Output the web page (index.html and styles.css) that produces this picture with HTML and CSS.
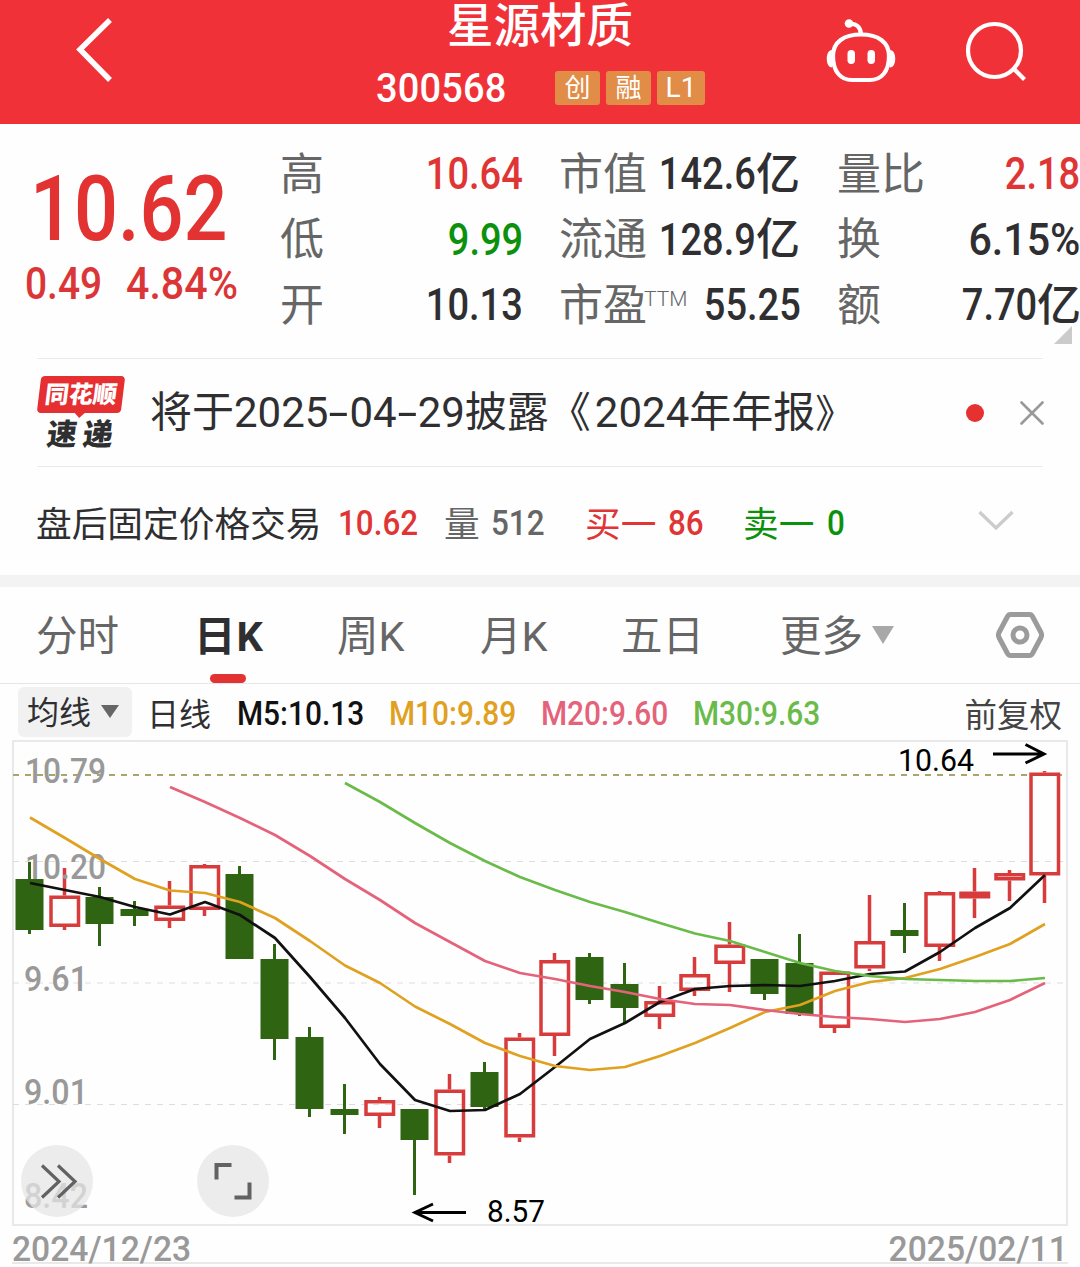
FILE: index.html
```html
<!DOCTYPE html>
<html lang="zh-CN">
<head>
  <meta charset="UTF-8" />
  <meta name="viewport" content="width=device-width, initial-scale=1.0" />
  <title>星源材质 300568</title>
  <link rel="stylesheet" href="styles.css">
</head>
<body>
  <!-- Header -->
  <header class="header">
    <svg class="back-icon" width="44" height="70" viewBox="0 0 44 70">
      <path d="M38 6 L8 35.500 L38 66" />
    </svg>
    <div class="stock">
      <h1 class="stock-name">星源材质</h1>
      <div class="stock-meta">
        <span class="stock-code">300568</span>
        <span class="tag">创</span>
        <span class="tag">融</span>
        <span class="tag tag-level">L1</span>
      </div>
    </div>
    <div class="header-actions">
      <svg width="72" height="66" viewBox="0 0 72 66">
        <path class="line" d="M37 16.500 C54 16.500 65 24 65 38 C65 54 57 62 46 62 H28 C17 62 9 54 9 38 C9 24 20 16.500 37 16.500 Z" />
        <path class="line" d="M26 6 C32 5 36.500 9 37 16" />
        <circle class="solid" cx="25" cy="5.500" r="4.300" />
        <path class="solid" d="M8 32 C1 32 1 49.500 8 49.500 Z M66 32 C73 32 73 49.500 66 49.500 Z" />
        <rect class="solid" x="23.500" y="32" width="7.500" height="14" rx="3.700" />
        <rect class="solid" x="43.500" y="32" width="7.500" height="14" rx="3.700" />
      </svg>
      <svg width="64" height="64" viewBox="0 0 64 64">
        <circle class="line" cx="30.500" cy="32.500" r="26.500" />
        <path class="line" d="M49 50 L60.500 61.500" />
      </svg>
    </div>
  </header>

  <!-- Quote -->
  <section class="quote">
    <div class="quote-main">
      <div class="price"><span class="num">10.62</span></div>
      <div class="change"><span class="num">0.49</span><span class="num percent">4.84%</span></div>
    </div>
    <div class="stats">
      <div class="stat"><span class="label">高</span><span class="num up">10.64</span></div>
      <div class="stat"><span class="label">市值</span><span class="num">142.6</span><span class="unit">亿</span></div>
      <div class="stat"><span class="label">量比</span><span class="num up">2.18</span></div>
      <div class="stat"><span class="label">低</span><span class="num down">9.99</span></div>
      <div class="stat"><span class="label">流通</span><span class="num">128.9</span><span class="unit">亿</span></div>
      <div class="stat"><span class="label">换</span><span class="num percent">6.15%</span></div>
      <div class="stat"><span class="label">开</span><span class="num">10.13</span></div>
      <div class="stat"><span class="label">市盈<sup>TTM</sup></span><span class="num">55.25</span></div>
      <div class="stat"><span class="label">额</span><span class="num">7.70</span><span class="unit">亿</span></div>
    </div>
    <div class="corner"></div>
  </section>

  <!-- News -->
  <section class="news">
    <div class="news-logo">
      <div class="logo-top">同花顺</div>
      <div class="logo-bottom">速递</div>
    </div>
    <p class="news-text">将于2025<i>-</i>04<i>-</i>29披露《<span class="year">2024</span>年年报<span class="close-mark">》</span></p>
    <span class="dot"></span>
    <svg class="close" width="24" height="24" viewBox="0 0 24 24"><path d="M1.500 1.500 L22.500 22.500 M22.500 1.500 L1.500 22.500" /></svg>
  </section>

  <!-- After-hours trading -->
  <section class="after">
    <span>盘后固定价格交易</span>
    <span class="num up">10.62</span>
    <span class="grey">量</span>
    <span class="num grey">512</span>
    <span class="up">买一</span>
    <span class="num up">86</span>
    <span class="down">卖一</span>
    <span class="num down">0</span>
    <svg width="36" height="22" viewBox="0 0 36 22"><path d="M1.500 2 L18 18 L34.500 2" /></svg>
  </section>

  <!-- Period tabs -->
  <nav class="tabs">
    <span class="tab">分时</span>
    <span class="tab active">日K</span>
    <span class="tab">周K</span>
    <span class="tab">月K</span>
    <span class="tab">五日</span>
    <span class="tab">更多<i class="caret"></i></span>
    <svg width="50" height="48" viewBox="0 0 50 48">
      <path d="M15.500 3.500 H34.500 Q36.500 3.500 37.500 5.500 L46 21.500 Q47.200 24 46 26.500 L37.500 42.500 Q36.500 44.500 34.500 44.500 H15.500 Q13.500 44.500 12.500 42.500 L4 26.500 Q2.800 24 4 21.500 L12.500 5.500 Q13.500 3.500 15.500 3.500 Z" />
      <circle cx="25" cy="24" r="7" />
    </svg>
  </nav>

  <!-- Moving averages -->
  <div class="averages">
    <span class="picker">均线<i class="caret"></i></span>
    <span class="cycle">日线</span>
    <span class="ma ma5">M5:10.13</span>
    <span class="ma ma10">M10:9.89</span>
    <span class="ma ma20">M20:9.60</span>
    <span class="ma ma30">M30:9.63</span>
    <span class="adjust">前复权</span>
  </div>

  <!-- Candle chart -->
  <svg class="chart" width="1080" height="487" viewBox="0 740 1080 487">
    <rect class="frame" x="13" y="741" width="1054" height="484" />
    <path class="grid" d="M13 861.500 H1067 M13 983 H1067 M13 1104.500 H1067" />
    <path class="last" d="M13 775 H1062" />
    <g id="candles"></g>
    <g class="axis">
      <text x="25" y="783" textLength="81" lengthAdjust="spacingAndGlyphs">10.79</text>
      <text x="25" y="879" textLength="81" lengthAdjust="spacingAndGlyphs">10.20</text>
      <text x="24" y="991" textLength="64" lengthAdjust="spacingAndGlyphs">9.61</text>
      <text x="24" y="1104" textLength="64" lengthAdjust="spacingAndGlyphs">9.01</text>
      <text x="24" y="1208" textLength="64" lengthAdjust="spacingAndGlyphs">8.42</text>
    </g>
    <g id="lines"></g>
    <g class="marks">
      <text x="898" y="771" textLength="76" lengthAdjust="spacingAndGlyphs">10.64</text>
      <path d="M993 754 H1044 M1025.500 744.500 L1044 754 L1025.500 763" />
      <text x="487" y="1222" textLength="58" lengthAdjust="spacingAndGlyphs">8.57</text>
      <path d="M466 1212.500 H415 M433 1204 L415 1212.500 L433 1221" />
    </g>
    <g class="tools">
      <circle cx="57" cy="1181" r="36" />
      <path class="thin" d="M42 1165.500 L59 1181.500 L42 1197.500 M58 1165.500 L75 1181.500 L58 1197.500" />
      <circle cx="233" cy="1181" r="36" />
      <path d="M216.500 1179.500 V1165 H231.500 M234.500 1197.500 H249.500 V1182.500" />
    </g>
  </svg>
  <footer class="dates"><span>2024/12/23</span><span>2025/02/11</span></footer>

  <script>
    // [rising, high, body top, body bottom, low] in chart units
    const candles = [
      [0, 862, 879, 930, 934], [1, 868, 895.5, 927, 930], [0, 887, 897, 924, 946],
      [0, 901, 909, 916, 926], [1, 881, 905.5, 921, 928], [1, 864, 865, 910, 916],
      [0, 866, 874, 959, 959], [0, 944, 959, 1039, 1060], [0, 1027, 1037, 1109, 1117],
      [0, 1084, 1109, 1115, 1134], [1, 1097, 1100, 1116, 1128], [0, 1109, 1109, 1140, 1195],
      [1, 1074, 1089.5, 1155.5, 1163], [0, 1062, 1072, 1107, 1109], [1, 1033, 1037.5, 1137.5, 1142],
      [1, 953, 960, 1036, 1056], [0, 953, 957, 1000, 1004], [0, 963, 984, 1008, 1024],
      [1, 986, 1001, 1017, 1029], [1, 957, 974, 991, 996], [1, 922, 944.5, 964, 992],
      [0, 959, 959, 994, 1000], [0, 934, 963, 1014, 1016], [1, 970, 971.5, 1028, 1033],
      [1, 895, 941, 968.5, 971], [0, 903, 930, 936, 953], [1, 891, 892, 947, 961],
      [1, 868, 891.5, 898.5, 918], [1, 870, 873, 880.5, 901], [1, 771, 772.5, 875.5, 903]
    ];
    // first candle index, then one y value per candle
    const averages = {
      ma5: [0, 883, 890, 897, 907, 914.5, 902, 915, 938, 977, 1018, 1064, 1100, 1111, 1110, 1094, 1067, 1039, 1023, 1002, 989, 986, 985, 986, 981, 974, 971.5, 952, 928, 908, 875],
      ma10: [0, 817.5, 838, 859, 879, 890.5, 893, 902, 918, 941, 965.5, 983, 1006.5, 1024, 1043, 1056, 1066, 1070, 1067, 1056, 1043, 1028, 1012, 1005, 991, 982, 978, 969, 957, 944, 924],
      ma20: [4, 787, 802, 818, 835, 856, 879, 900, 923, 942, 961, 973, 979, 986, 992, 999, 1004, 1005, 1010, 1014, 1017, 1019, 1022, 1019, 1012, 1000, 983],
      ma30: [9, 783, 802, 823, 843, 861, 877, 890, 902, 912, 923, 933.5, 941, 952, 963, 971, 976, 979, 980, 981, 981, 978]
    };
    const step = 35;

    document.getElementById('candles').innerHTML = candles.map(([up, high, top, bottom, low], i) => {
      const x = 29.5 + i * step;
      const wick = `<path d="M${x} ${high} V${top} M${x} ${bottom} V${low}" />`;
      const body = up
        ? `<rect x="${x - 13.5}" y="${top + 1.75}" width="27.500" height="${bottom - top - 3.5}" />`
        : `<rect x="${x - 14}" y="${top}" width="28" height="${bottom - top}" />`;
      return `<g class="${up ? 'rise' : 'fall'}">${wick}${body}</g>`;
    }).join('');

    document.getElementById('lines').innerHTML = ['ma5', 'ma10', 'ma20', 'ma30'].map(name => {
      const [start, ...ys] = averages[name];
      const points = ys.map((y, i) => `${30 + (start + i) * step},${y}`).join(' ');
      return `<polyline class="${name}" points="${points}" />`;
    }).join('');
  </script>
</body>
</html>
```

FILE: styles.css
```css
* { box-sizing: border-box; margin: 0; padding: 0; }
body {
  width: 1080px; height: 1267px;
  overflow: hidden;
  background: #fefefe;
  color: #2f2f31;
  font-family: Roboto, "Noto Sans CJK SC", sans-serif;
}
svg { display: block; flex: none; }
i { font-style: normal; }
.num {
  display: inline-block;
  font-weight: 500;
  transform: scaleX(.88);
  transform-origin: left;
}
.up { color: #df3535; }
.down { color: #0c910c; }
.grey { color: #666; }

/* Header */
.header {
  height: 124px;
  display: flex;
  padding: 0 52px 0 72px;
  background: #f03138;
  color: #fff;
}
.header svg { fill: none; stroke: #fff; stroke-width: 4.2; }
.back-icon { margin-top: 14px; }
.header .back-icon { stroke-width: 5.5; }
.header .solid { fill: #fff; stroke: none; }
.stock { width: 330px; margin-left: 260px; }
.stock-name {
  height: 52px; line-height: 52px;
  padding-left: 71px;
  font-size: 46.5px; font-weight: 500;
}
.stock-meta { display: flex; align-items: center; gap: 6px; margin-top: 18px; }
.stock-code {
  width: 173px; line-height: 36px;
  font-size: 41.5px; font-weight: 500;
  transform: scaleX(.915); transform-origin: left;
  letter-spacing: .2px;
}
.tag {
  width: 45px; height: 34px;
  flex: none;
  border-radius: 3px;
  background: #e18d47;
  font-size: 26px; line-height: 34px; text-align: center;
}
.tag-level { width: 48px; font-size: 28px; }
.header-actions { display: flex; gap: 68px; padding-top: 18px; margin-left: auto; }

/* Quote */
.quote { position: relative; height: 234px; display: flex; padding-top: 16px; }
.quote-main { width: 280px; color: #e33232; }
.price { height: 108px; padding: 17px 0 0 30px; font-size: 90px; line-height: 105px; }
.price .num { transform: scaleX(.86); }
.change { display: flex; padding-left: 25px; font-size: 45px; line-height: 72px; color: #db3637; }
.change .num { width: 101px; transform: scaleX(.865); }
.change .percent { transform: scaleX(.915); }
.stats {
  display: grid;
  grid-template-columns: 243px 242px 243px;
  grid-auto-rows: 65.500px;
  column-gap: 36px;
}
.stat { display: flex; align-items: center; font-size: 44px; line-height: 60px; }
.label { flex: 1; min-width: 0; padding-top: 4px; color: #666; white-space: nowrap; }
.label sup { margin-left: -3px; font-size: 21px; font-weight: 300; line-height: 1; vertical-align: 15px; }
.stat .num { transform: scaleX(.845); transform-origin: right; font-size: 45px; padding-top: 3px; }
.stat .percent { transform: scaleX(.915); }
.unit { font-weight: 500; margin-right: -1px; padding-top: 4px; }
.stat:nth-child(3n+2) .unit { margin-right: 1px; }
.corner {
  position: absolute; right: 8px; bottom: 14px;
  border-left: 18px solid transparent;
  border-bottom: 18px solid #cbcbcb;
}

/* News */
.news {
  height: 109px; margin: 0 37px;
  display: flex; align-items: center;
  border-top: 1px solid #ebebeb; border-bottom: 1px solid #ebebeb;
}
.news-logo { width: 88px; height: 74px; flex: none; }
.logo-top {
  position: relative;
  width: 84px; height: 37px; margin-left: 2px;
  border-radius: 4px;
  background: #e52f31;
  color: #fff;
  font-size: 24px; font-weight: 900; line-height: 39px; text-align: center;
  transform: skewX(-7deg);
}
.logo-top::after {
  content: "";
  position: absolute; left: 37px; top: 36px;
  border: 6px solid transparent; border-top-color: #e52f31; border-bottom: 0;
}
.logo-bottom {
  padding-left: 10px;
  font-size: 30px; font-weight: 900; line-height: 44px; letter-spacing: 6px;
  white-space: nowrap;
  transform: skewX(-7deg);
}
.news-text { flex: 1; padding: 2px 0 0 25px; font-size: 42px; line-height: 60px; white-space: nowrap; }
.news-text i { display: inline-block; width: 21px; text-align: center; transform: scaleX(1.7); }
.year { margin-left: 4px; }
.close-mark { font-size: 39px; }
.dot { width: 18px; height: 18px; border-radius: 50%; background: #e63131; margin-right: 36px; }
.close { margin-right: -1px; stroke: #999; stroke-width: 2.6; stroke-linecap: round; }

/* After-hours trading */
.after {
  height: 120px;
  display: grid; align-items: center;
  grid-template-columns: 302px 106px 47px 94px 83px 75px 84px 1fr auto;
  padding: 0 66px 0 36px;
  border-bottom: 12px solid #f3f3f3;
  font-size: 35.700px;
  white-space: nowrap;
}
.after svg { fill: none; stroke: #ccc; stroke-width: 3.4; }
.after .num { padding-top: 3px; }

/* Period tabs */
.tabs {
  height: 97px;
  display: grid; align-items: center;
  grid-template-columns: 159px 142px 143px 141px 159px 1fr auto;
  padding: 0 35px 0 36px;
  border-bottom: 1px solid #e6e6e6;
  color: #666;
  font-size: 41.500px;
}
.tab { position: relative; height: 96px; line-height: 99px; white-space: nowrap; }
.tab.active { color: #2f2f31; font-weight: 700; text-indent: -1px; letter-spacing: 1px; }
.tab.active::after {
  content: "";
  position: absolute; left: 15px; bottom: 0;
  width: 36px; height: 9px; border-radius: 5px;
  background: #e33232;
}
.caret {
  display: inline-block;
  border: 11px solid transparent; border-top: 18px solid #a8a8a8; border-bottom: 0;
  margin-left: 9px; vertical-align: 7px;
}
.tabs svg { fill: none; stroke: #9b9b9b; stroke-width: 5; }

/* Moving averages */
.averages {
  height: 56px;
  display: flex; align-items: center;
  padding: 0 18px;
  font-size: 32px;
}
.picker {
  width: 114px; height: 50px; line-height: 52px;
  padding-left: 9px; margin-right: 15px;
  border-radius: 6px;
  background: #f1f1f1;
  white-space: nowrap;
}
.picker .caret { border-width: 13px 9.500px 0; border-top-color: #666; vertical-align: 6px; margin-left: 10px; }
.cycle { width: 90px; }
.ma {
  width: 152px; padding-top: 3px;
  font-size: 33px; font-weight: 500; white-space: nowrap;
  transform: scaleX(.905); transform-origin: left;
}
.averages .ma5 { color: #111; }
.averages .ma10 { color: #dfa11f; }
.averages .ma20 { color: #e4637a; }
.averages .ma30 { color: #6abb49; }
.adjust { flex: 1; text-align: right; font-size: 32.500px; color: #444; }

/* Candle chart */
.chart { font-family: Roboto, sans-serif; overflow: visible; }
.frame { fill: none; stroke: #e9e9e9; stroke-width: 2; }
.grid { stroke: #ddd; stroke-width: 1.2; stroke-dasharray: 6 6; }
.last { stroke: #aaa56a; stroke-width: 1.8; stroke-dasharray: 6 6; }
.rise { fill: none; stroke: #d83b3b; stroke-width: 3.5; }
.fall { fill: #2f6412; }
.fall path { stroke: #2f6412; stroke-width: 3; }
.chart polyline { fill: none; stroke-width: 2.7; stroke-linejoin: round; }
.chart .ma5 { stroke: #111; }
.chart .ma10 { stroke: #dfa11f; }
.chart .ma20 { stroke: #e4637a; }
.chart .ma30 { stroke: #6abb49; }
.axis { fill: #999; font-size: 35px; font-weight: 500; }
.marks { font-size: 30.500px; }
.marks path { fill: none; stroke: #000; stroke-width: 3; }
.tools circle { fill: #e6e6e6; fill-opacity: .75; }
.tools path { fill: none; stroke: #626262; stroke-width: 4; }
.tools .thin { stroke-width: 3.2; }
.dates {
  height: 37px; margin: 0 12px; padding-top: 7px;
  display: flex; justify-content: space-between;
  border-bottom: 2px solid #e9e9e9;
  color: #999;
  font-size: 34.500px; font-weight: 500; line-height: 31px;
}
.dates span { transform: scaleX(.975); transform-origin: left; }
.dates span:last-child { transform-origin: right; }
```
